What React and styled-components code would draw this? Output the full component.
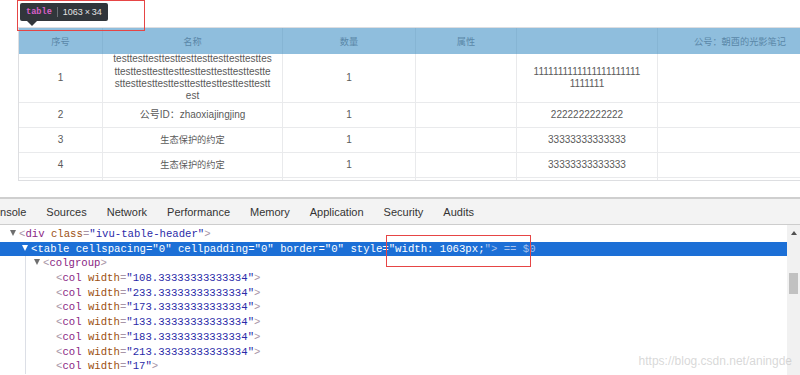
import React from "react";
import styled, { createGlobalStyle } from "styled-components";

const GlobalStyle = createGlobalStyle`
  html, body {
    margin: 0;
    padding: 0;
    background: #fff;
  }
  body {
    width: 800px;
    height: 375px;
    overflow: hidden;
  }
`;

const columns = [
  { title: "序号", width: 84 },
  { title: "名称", width: 180 },
  { title: "数量", width: 133 },
  { title: "属性", width: 101 },
  { title: "", width: 141 },
  { title: "公号：朝酉的光影笔记", width: 165 },
];

const rows = [
  { no: 1, name: "test".repeat(30), nameWrap: 39, qty: 1, code: "1".repeat(29), codeWrap: 22, height: 48 },
  { no: 2, name: "公号ID：zhaoxiajingjing", qty: 1, code: "2".repeat(13), height: 24 },
  { no: 3, name: "生态保护的约定", cjk: true, qty: 1, code: "3".repeat(14), height: 24 },
  { no: 4, name: "生态保护的约定", cjk: true, qty: 1, code: "3".repeat(14), height: 24 },
  { no: 5, name: "", qty: "", code: "", height: 2 },
];

const colWidths = [
  "108.33333333333334",
  "233.33333333333334",
  "173.33333333333334",
  "133.33333333333334",
  "183.33333333333334",
  "213.33333333333334",
  "17",
];

const tabs = ["Console", "Sources", "Network", "Performance", "Memory", "Application", "Security", "Audits"];

function chunk(str, n) {
  if (!n) return [str];
  const out = [];
  for (let i = 0; i < str.length; i += n) out.push(str.slice(i, i + n));
  return out;
}

function Wrapped({ text, size }) {
  return chunk(String(text), size).map((line, i) => <TextLine key={i}>{line}</TextLine>);
}

export default function App() {
  return (
    <Page>
      <GlobalStyle />
      <Viewport>
        <TableWrap>
          <Table>
            <colgroup>
              {columns.map((c, i) => (
                <col key={i} style={{ width: c.width }} />
              ))}
            </colgroup>
            <thead>
              <tr>
                {columns.map((c, i) => (
                  <Th key={i}>
                    <HeadInner>{c.title}</HeadInner>
                  </Th>
                ))}
              </tr>
            </thead>
            <tbody>
              {rows.map((r) => (
                <tr key={r.no}>
                  <Td>
                    <CellInner $h={r.height}>{r.qty === "" ? "" : r.no}</CellInner>
                  </Td>
                  <Td>
                    <CellInner $h={r.height} $cjk={r.cjk}>
                      <Wrapped text={r.name} size={r.nameWrap} />
                    </CellInner>
                  </Td>
                  <Td>
                    <CellInner $h={r.height}>{r.qty}</CellInner>
                  </Td>
                  <Td>
                    <CellInner $h={r.height} />
                  </Td>
                  <Td>
                    <CellInner $h={r.height}>
                      <Wrapped text={r.code} size={r.codeWrap} />
                    </CellInner>
                  </Td>
                  <Td>
                    <CellInner $h={r.height} />
                  </Td>
                </tr>
              ))}
            </tbody>
          </Table>
        </TableWrap>
      </Viewport>

      <DevTools>
        <TabBar>
          <TabStrip>
            {tabs.map((t) => (
              <Tab key={t}>{t}</Tab>
            ))}
          </TabStrip>
        </TabBar>
        <Panel>
          <Tree>
            <Line $indent={10}>
              <Arrow />
              <Br>&lt;</Br>
              <TagName>div</TagName> <AttrName>class</AttrName>
              <Br>=</Br>
              <AttrValue>"ivu-table-header"</AttrValue>
              <Br>&gt;</Br>
            </Line>
            <Line $indent={22} $selected>
              <Arrow $light />
              <Br>&lt;</Br>
              <TagName>table</TagName> <AttrName>cellspacing</AttrName>
              <Br>=</Br>
              <AttrValue>"0"</AttrValue> <AttrName>cellpadding</AttrName>
              <Br>=</Br>
              <AttrValue>"0"</AttrValue> <AttrName>border</AttrName>
              <Br>=</Br>
              <AttrValue>"0"</AttrValue> <AttrName>style</AttrName>
              <Br>=</Br>
              <AttrValue>"width: 1063px;</AttrValue>
              <Dim>"&gt; == $0</Dim>
            </Line>
            <Children>
              <Line $indent={8}>
                <Arrow />
                <Br>&lt;</Br>
                <TagName>colgroup</TagName>
                <Br>&gt;</Br>
              </Line>
              {colWidths.map((w, i) => (
                <Line key={i} $indent={20}>
                  <Spacer />
                  <Br>&lt;</Br>
                  <TagName>col</TagName> <AttrName>width</AttrName>
                  <Br>=</Br>
                  <AttrValue>"{w}"</AttrValue>
                  <Br>&gt;</Br>
                </Line>
              ))}
            </Children>
          </Tree>
          <Scrollbar>
            <ScrollUp />
            <Thumb />
          </Scrollbar>
        </Panel>
      </DevTools>

      <Tooltip>
        <TipTag>table</TipTag>
        <TipDivider />
        <TipSize>1063{"\u2009×\u2009"}34</TipSize>
      </Tooltip>
      <RedBox $x={17} $y={0} $w={128} $h={31} />
      <RedBox $x={386} $y={235} $w={145} $h={32} />
      <Watermark>https://blog.csdn.net/aningde</Watermark>
    </Page>
  );
}

const Page = styled.div`
  position: relative;
  width: 800px;
  height: 375px;
  display: flex;
  flex-direction: column;
  overflow: hidden;
  font-family: "Liberation Sans", "Noto Sans CJK SC", sans-serif;
`;

const Viewport = styled.div`
  height: 197px;
  padding: 27px 0 0 18px;
  box-sizing: border-box;
  overflow: hidden;
  flex-shrink: 0;
`;

const TableWrap = styled.div`
  width: 830px;
  height: 154px;
  box-sizing: border-box;
  border: 1px solid #dddee1;
  border-right: none;
  overflow: hidden;
`;

const Table = styled.table`
  table-layout: fixed;
  width: 804px;
  border-collapse: separate;
  border-spacing: 0;
  font-size: 10px;
`;

const Th = styled.th`
  padding: 0;
  background: #8fbedd;
  border-right: 1px solid #86b5d4;
  font-weight: normal;
  font-size: 9.2px;
  color: #5a87a8;
`;

const HeadInner = styled.div`
  height: 26px;
  display: flex;
  align-items: center;
  justify-content: center;
  white-space: nowrap;
`;

const Td = styled.td`
  padding: 0;
  border-right: 1px solid #e9eaec;
  border-bottom: 1px solid #e9eaec;
  color: #5a5a5a;
`;

const CellInner = styled.div`
  height: ${(p) => p.$h}px;
  display: flex;
  flex-direction: column;
  align-items: center;
  justify-content: center;
  line-height: 12.3px;
  font-size: ${(p) => (p.$cjk ? "9.2px" : "10px")};
  white-space: nowrap;
  overflow: visible;
`;

const TextLine = styled.span`
  display: block;
`;

const DevTools = styled.div`
  flex: 1;
  display: flex;
  flex-direction: column;
  border-top: 2px solid #cfcfcf;
  background: #fff;
  min-height: 0;
`;

const TabBar = styled.div`
  height: 25px;
  background: #f3f3f3;
  border-bottom: 1px solid #cdcdcd;
  overflow: hidden;
  flex-shrink: 0;
`;

const TabStrip = styled.div`
  display: flex;
  align-items: center;
  height: 100%;
  margin-left: -24px;
`;

const Tab = styled.div`
  padding: 0 10px;
  font-size: 11px;
  color: #333;
  white-space: nowrap;
`;

const Panel = styled.div`
  flex: 1;
  display: flex;
  min-height: 0;
`;

const Tree = styled.div`
  flex: 1;
  padding-top: 2px;
  font-family: "Liberation Mono", "DejaVu Sans Mono", monospace;
  font-size: 10.65px;
  overflow: hidden;
`;

const Br = styled.span`
  color: #a894a6;
`;

const TagName = styled.span`
  color: #8a1f84;
`;

const AttrName = styled.span`
  color: #9c5010;
`;

const AttrValue = styled.span`
  color: #2a2aa8;
`;

const Dim = styled.span`
  color: #a894a6;
`;

const Arrow = styled.span`
  display: inline-block;
  width: 0;
  height: 0;
  margin-right: 3px;
  border-left: 3.5px solid transparent;
  border-right: 3.5px solid transparent;
  border-top: 6px solid ${(p) => (p.$light ? "#fff" : "#6e6e6e")};
  vertical-align: 1px;
`;

const Spacer = styled.span`
  display: inline-block;
  width: 10px;
`;

const Line = styled.div`
  height: 14.7px;
  line-height: 14.7px;
  white-space: pre;
  padding-left: ${(p) => p.$indent}px;
  background: ${(p) => (p.$selected ? "#1c6fd6" : "transparent")};

  ${(p) =>
    p.$selected &&
    `
    & > span { color: #fff; }
  `}

  & > ${Dim} {
    color: ${(p) => (p.$selected ? "#a7c2ec" : "#a894a6")};
  }
`;

const Children = styled.div`
  margin-left: 25px;
  border-left: 1px solid #dcdfe6;
`;

const Scrollbar = styled.div`
  width: 13px;
  background: #f1f1f1;
  display: flex;
  flex-direction: column;
  align-items: center;
  flex-shrink: 0;
`;

const ScrollUp = styled.div`
  margin-top: 6px;
  width: 0;
  height: 0;
  border-left: 3px solid transparent;
  border-right: 3px solid transparent;
  border-bottom: 4px solid #505050;
`;

const Thumb = styled.div`
  margin-top: 38px;
  width: 9px;
  height: 21px;
  background: #c1c1c1;
`;

const Tooltip = styled.div`
  position: absolute;
  left: 20px;
  top: 3px;
  height: 18px;
  padding: 0 6px;
  display: flex;
  align-items: center;
  gap: 5px;
  background: #31363b;
  border-radius: 2px;

  &::after {
    content: "";
    position: absolute;
    left: 7px;
    top: 18px;
    border-left: 5px solid transparent;
    border-right: 5px solid transparent;
    border-top: 5px solid #31363b;
  }
`;

const TipTag = styled.span`
  font-family: "Liberation Mono", monospace;
  font-size: 8.6px;
  font-weight: bold;
  color: #d960c8;
`;

const TipDivider = styled.span`
  width: 1px;
  height: 10px;
  background: #6a6f75;
`;

const TipSize = styled.span`
  font-family: "Liberation Sans", sans-serif;
  font-size: 9px;
  color: #e3e3e3;
`;

const RedBox = styled.div`
  position: absolute;
  left: ${(p) => p.$x}px;
  top: ${(p) => p.$y}px;
  width: ${(p) => p.$w}px;
  height: ${(p) => p.$h}px;
  box-sizing: border-box;
  border: 1px solid #e64545;
  pointer-events: none;
`;

const Watermark = styled.div`
  position: absolute;
  right: 8px;
  bottom: 7px;
  font-family: "Liberation Sans", sans-serif;
  font-size: 12px;
  color: rgba(190, 190, 190, 0.6);
`;
